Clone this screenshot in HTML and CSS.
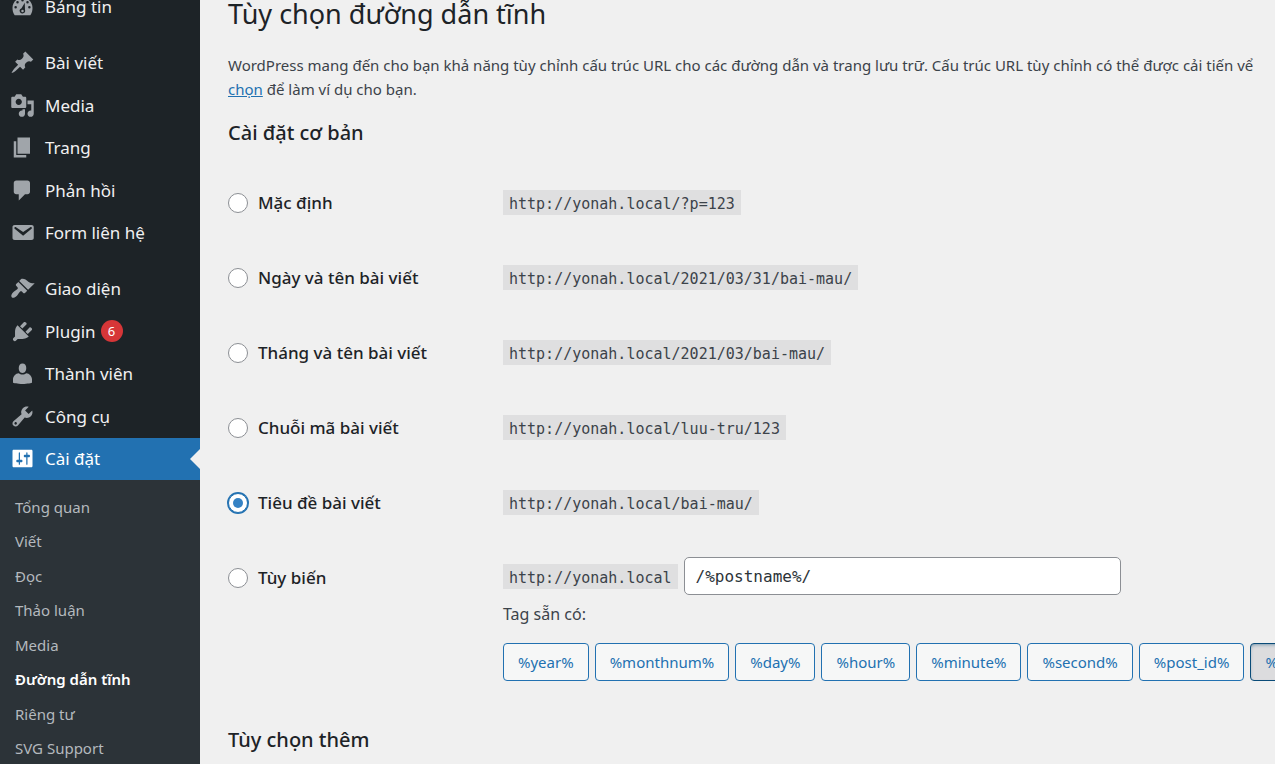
FILE: index.html
```html
<!DOCTYPE html>
<html lang="vi">
<head>
<meta charset="utf-8">
<title>Tùy chọn đường dẫn tĩnh</title>
<link rel="stylesheet" href="styles.css">
</head>
<body>
<div class="shell">
  <nav class="sidebar" aria-label="Menu chính">
    <ul class="menu">
      <li><a href="#"><svg class="icon" viewBox="0 0 20 20"><path fill-rule="evenodd" d="M3.76 17h12.48c1.34-1.63 1.76-3.73 1.76-6 0-4.42-3.58-8-8-8s-8 3.58-8 8c0 2.27.42 4.37 1.76 6zM10 4a1 1 0 1 1 0 2 1 1 0 0 1 0-2zM6 5.500a1 1 0 1 1 0 2 1 1 0 0 1 0-2zM14 5.500a1 1 0 1 1 0 2 1 1 0 0 1 0-2zM4.500 9.500a1 1 0 1 1 0 2 1 1 0 0 1 0-2zM15.500 9.500a1 1 0 1 1 0 2 1 1 0 0 1 0-2zM11.800 6.900L12 12.700a2.200 2.200 0 1 1-2.800-1.400zM10 12.500a1 1 0 1 0 0 2 1 1 0 0 0 0-2z"/></svg>Bảng tin</a></li>
    </ul>
    <ul class="menu">
      <li><a href="#"><svg class="icon" viewBox="0 0 20 20"><path d="M10.440 3.020l1.820-1.820 6.360 6.350-1.830 1.820c-1.050-.680-2.480-.570-3.410.360l-.750.750c-.920.930-1.040 2.350-.350 3.410l-1.830 1.820-2.410-2.410-2.800 2.790c-.420.420-3.380 2.710-3.800 2.290s1.860-3.390 2.280-3.810l2.790-2.790L4.100 9.360l1.830-1.820c1.050.690 2.480.570 3.400-.360l.75-.750c.930-.920 1.050-2.350.360-3.410z"/></svg>Bài viết</a></li>
      <li><a href="#"><svg class="icon" viewBox="0 0 20 20"><path d="M13 11V4c0-.55-.45-1-1-1h-1.670L9 1H5L3.670 3H2c-.55 0-1 .45-1 1v7c0 .55.45 1 1 1h10c.55 0 1-.45 1-1zM7 4.500c1.380 0 2.500 1.120 2.500 2.500S8.380 9.500 7 9.500 4.500 8.380 4.500 7 5.620 4.500 7 4.500zM14 6h5v10.500c0 1.380-1.120 2.500-2.500 2.500S14 17.880 14 16.500s1.120-2.500 2.500-2.500c.17 0 .34.02.5.05V9h-3V6zm-4 8.050V13h2v3.500c0 1.380-1.120 2.500-2.500 2.500S7 17.880 7 16.500 8.120 14 9.500 14c.17 0 .34.02.5.05z"/></svg>Media</a></li>
      <li><a href="#"><svg class="icon" viewBox="0 0 20 20"><path d="M6 15V2h10v13H6zm-1 1h8v2H3V5h2v11z"/></svg>Trang</a></li>
      <li><a href="#"><svg class="icon" viewBox="0 0 20 20"><path d="M5 2h9c1.100 0 2 .9 2 2v7c0 1.100-.9 2-2 2h-2l-5 5v-5H5c-1.100 0-2-.9-2-2V4c0-1.100.9-2 2-2z"/></svg>Phản hồi</a></li>
      <li><a href="#"><svg class="icon" viewBox="0 0 20 20"><path d="M3.870 4h13.250C18.370 4 19 4.590 19 5.790v8.420c0 1.190-.63 1.790-1.880 1.790H3.870c-1.250 0-1.880-.6-1.880-1.790V5.790c0-1.200.63-1.790 1.880-1.790zm6.620 8.600l6.740-5.530c.24-.2.43-.66.13-1.070-.29-.41-.82-.42-1.170-.17l-5.700 3.860L4.800 5.830c-.35-.25-.88-.24-1.170.17-.3.41-.11.87.13 1.070z"/></svg>Form liên hệ</a></li>
    </ul>
    <ul class="menu">
      <li><a href="#"><svg class="icon" viewBox="0 0 20 20"><path d="M14.480 11.060L7.410 3.990l1.500-1.500c.5-.56 2.300-.47 3.510.32 1.210.8 1.430 1.280 2.910 2.100 1.180.64 2.450 1.260 4.450.85zm-.71.71L6.700 4.700 4.930 6.470c-.39.39-.39 1.020 0 1.410l1.060 1.060c.39.39.39 1.030 0 1.420-.6.6-1.430 1.110-2.210 1.690-.35.26-.7.53-1.010.84C1.430 14.230.4 16.080 1.400 17.070c.99 1 2.840-.03 4.180-1.360.31-.31.58-.66.85-1.020.57-.78 1.080-1.610 1.690-2.210.39-.39 1.020-.39 1.410 0l1.060 1.060c.39.39 1.020.39 1.410 0z"/></svg>Giao diện</a></li>
      <li><a href="#"><svg class="icon" viewBox="0 0 20 20"><path d="M13.110 4.360L9.870 7.600 8 5.730l3.240-3.240c.35-.34 1.050-.2 1.560.32.52.51.66 1.210.31 1.550zm-8 1.770l.91-1.120 9.010 9.010-1.190.84c-.71.71-2.630 1.160-3.820 1.160H6.140L4.900 17.260c-.59.59-1.540.59-2.120 0-.59-.58-.59-1.530 0-2.120l1.240-1.240v-3.880c0-1.130.4-3.190 1.090-3.890zm7.260 3.970l3.240-3.240c.34-.35 1.040-.21 1.550.31.52.51.66 1.210.31 1.550l-3.240 3.250z"/></svg>Plugin<span class="badge">6</span></a></li>
      <li><a href="#"><svg class="icon" viewBox="0 0 20 20"><path d="M10 9.600c-2.300 0-3-2.300-3-4C7 3.600 8 2 10 2s3 1.600 3 3.600c0 1.700-.7 4-3 4zM7 9.700c.8.750 1.800 1.100 3 1.100s2.200-.35 3-1.100c2.500.2 4.600 2.400 4.600 4.900v2.700s-3.800 1-7.600 1-7.600-1-7.600-1v-2.700c0-2.500 2.100-4.700 4.600-4.900z"/></svg>Thành viên</a></li>
      <li><a href="#"><svg class="icon" viewBox="0 0 20 20"><path d="M16.680 9.770c-1.340 1.340-3.300 1.670-4.950.99l-5.410 6.520c-.99.99-2.590.99-3.580 0s-.99-2.590 0-3.570l6.520-5.420c-.68-1.650-.35-3.610.99-4.950 1.280-1.280 3.120-1.620 4.720-1.060l-2.890 2.890 2.820 2.820 2.860-2.870c.53 1.580.18 3.390-1.080 4.650zM3.810 16.210c.4.39 1.040.39 1.430 0 .4-.4.4-1.040 0-1.430-.39-.4-1.030-.4-1.430 0-.39.39-.39 1.030 0 1.430z"/></svg>Công cụ</a></li>
      <li><a class="current" href="#"><svg class="icon" viewBox="0 0 20 20"><path d="M18 16V4c0-.55-.45-1-1-1H3c-.55 0-1 .45-1 1v12c0 .55.45 1 1 1h14c.55 0 1-.45 1-1zM8 11h1c.55 0 1 .45 1 1s-.45 1-1 1H8v1.500c0 .28-.22.5-.5.5s-.5-.22-.5-.5V13H6c-.55 0-1-.45-1-1s.45-1 1-1h1V5.500c0-.28.22-.5.5-.5s.5.22.5.5V11zm5-2h-1c-.55 0-1-.45-1-1s.45-1 1-1h1V5.500c0-.28.22-.5.5-.5s.5.22.5.5V7h1c.55 0 1 .45 1 1s-.45 1-1 1h-1v5.500c0 .28-.22.5-.5.5s-.5-.22-.5-.5V9z"/></svg>Cài đặt</a></li>
    </ul>
    <ul class="submenu">
      <li><a href="#">Tổng quan</a></li>
      <li><a href="#">Viết</a></li>
      <li><a href="#">Đọc</a></li>
      <li><a href="#">Thảo luận</a></li>
      <li><a href="#">Media</a></li>
      <li><a class="here" href="#">Đường dẫn tĩnh</a></li>
      <li><a href="#">Riêng tư</a></li>
      <li><a href="#">SVG Support</a></li>
    </ul>
  </nav>

  <main class="content">
    <h1>Tùy chọn đường dẫn tĩnh</h1>
    <p class="intro">WordPress mang đến cho bạn khả năng tùy chỉnh cấu trúc URL cho các đường dẫn và trang lưu trữ. Cấu trúc URL tùy chỉnh có thể được cải tiến vể<br><a href="#">chọn</a> để làm ví dụ cho bạn.</p>
    <h2>Cài đặt cơ bản</h2>
    <form class="options">
      <div class="option">
        <label><input type="radio" name="structure">Mặc định</label>
        <div><code>http://yonah.local/?p=123</code></div>
      </div>
      <div class="option">
        <label><input type="radio" name="structure">Ngày và tên bài viết</label>
        <div><code>http://yonah.local/2021/03/31/bai-mau/</code></div>
      </div>
      <div class="option">
        <label><input type="radio" name="structure">Tháng và tên bài viết</label>
        <div><code>http://yonah.local/2021/03/bai-mau/</code></div>
      </div>
      <div class="option">
        <label><input type="radio" name="structure">Chuỗi mã bài viết</label>
        <div><code>http://yonah.local/luu-tru/123</code></div>
      </div>
      <div class="option">
        <label><input type="radio" name="structure" checked>Tiêu đề bài viết</label>
        <div><code>http://yonah.local/bai-mau/</code></div>
      </div>
      <div class="option">
        <label><input type="radio" name="structure">Tùy biến</label>
        <div class="custom">
          <div class="address"><code>http://yonah.local</code><input class="pattern" type="text" value="/%postname%/" aria-label="Cấu trúc tùy biến"></div>
          <p class="hint">Tag sẵn có:</p>
          <div class="tags">
            <button type="button">%year%</button>
            <button type="button">%monthnum%</button>
            <button type="button">%day%</button>
            <button type="button">%hour%</button>
            <button type="button">%minute%</button>
            <button type="button">%second%</button>
            <button type="button">%post_id%</button>
            <button type="button" class="pressed">%postname%</button>
          </div>
        </div>
      </div>
    </form>
    <h2 class="more">Tùy chọn thêm</h2>
  </main>
</div>
</body>
</html>
```

FILE: styles.css
```css
* { box-sizing: border-box; }

body {
  margin: 0;
  background: #f0f0f0;
  color: #3c434a;
  font-family: "Noto Sans", "Open Sans", sans-serif;
  overflow: hidden;
}

.shell {
  display: flex;
  height: 100vh;
  overflow: hidden;
}

/* Sidebar */
.sidebar {
  flex: none;
  width: 200px;
  margin-top: -14px;
  background: #1d2327;
}

.menu,
.submenu {
  margin: 0;
  padding: 0;
  list-style: none;
}

.menu + .menu { margin-top: 14px; }

.menu li { height: 42px; }
.menu li:nth-child(even) { height: 43px; }

.menu a {
  position: relative;
  display: flex;
  align-items: center;
  gap: 10px;
  height: 100%;
  padding: 0 0 1px 10px;
  color: #f0f0f1;
  font-size: 17px;
  text-decoration: none;
}

.icon {
  flex: none;
  width: 25px;
  height: 25px;
  fill: #a0a5aa;
}

.badge {
  width: 22px;
  height: 22px;
  margin-left: -5px;
  border-radius: 11px;
  background: #d63638;
  color: #fff;
  font-size: 13px;
  line-height: 22px;
  text-align: center;
}

.menu .current {
  background: #2271b1;
  color: #fff;
}

.current .icon { fill: #fff; }

.current::after {
  content: "";
  position: absolute;
  top: 11px;
  right: 0;
  border: 10px solid transparent;
  border-left-width: 0;
  border-right-color: #f0f0f0;
}

.submenu {
  padding: 10px 0;
  background: #2c3338;
}

.submenu li { height: 34px; }
.submenu li:nth-child(even) { height: 35px; }

.submenu a {
  display: flex;
  align-items: center;
  height: 100%;
  padding: 0 0 1px 15px;
  color: #b4b9be;
  font-size: 15px;
  text-decoration: none;
}

.submenu .here {
  color: #fff;
  font-weight: 600;
}

/* Settings page */
.content {
  flex: 1;
  min-width: 0;
  padding-left: 28px;
  overflow: hidden;
}

h1 {
  margin: 0;
  color: #1d2327;
  font-size: 27px;
  font-weight: 400;
  line-height: 28px;
}

.intro {
  margin: 25px 0 0;
  font-size: 15px;
  line-height: 24px;
  white-space: nowrap;
}

.intro a { color: #2271b1; }

h2 {
  margin: 16px 0 0;
  color: #1d2327;
  font-size: 20px;
  font-weight: 500;
  line-height: 32px;
}

.options { padding-top: 41px; }

.option {
  display: grid;
  grid-template-columns: 275px 1fr;
  align-items: start;
  min-height: 75px;
}

.option label {
  display: flex;
  align-items: center;
  gap: 10px;
  color: #1d2327;
  font-size: 17px;
  font-weight: 500;
  line-height: 26px;
}

.option input[type="radio"] {
  appearance: none;
  flex: none;
  display: grid;
  place-items: center;
  width: 20px;
  height: 20px;
  margin: 0;
  border: 1px solid #8c8f94;
  border-radius: 50%;
  background: #fff;
}

.option input[type="radio"]:checked {
  border-color: #2271b1;
  box-shadow: 0 0 0 1px #2271b1;
}

.option input[type="radio"]:checked::before {
  content: "";
  width: 10px;
  height: 10px;
  border-radius: 50%;
  background: #3582c4;
}

code {
  display: block;
  width: max-content;
  padding: 3px 6px 0;
  background: #dfdfe0;
  font-family: "DejaVu Sans Mono", "Liberation Mono", monospace;
  font-size: 15px;
  line-height: 22px;
}

.custom { margin-top: -8px; }

.address {
  display: flex;
  align-items: center;
  gap: 6px;
}

.pattern {
  width: 437px;
  height: 38px;
  padding: 0 11px;
  border: 1px solid #8c8f94;
  border-radius: 5px;
  background: #fff;
  color: #2c3338;
  font-family: "DejaVu Sans Mono", "Liberation Mono", monospace;
  font-size: 16px;
}

.hint {
  margin: 6px 0 16px;
  font-size: 16px;
  line-height: 26px;
}

.tags {
  display: flex;
  gap: 6px;
}

.tags button {
  flex: none;
  height: 38px;
  padding: 0 14px;
  border: 1px solid #2271b1;
  border-radius: 4px;
  background: #f6f7f7;
  color: #2271b1;
  font-family: inherit;
  font-size: 15px;
}

.tags .pressed {
  border-color: #0a4b78;
  background: #dcdcde;
  box-shadow: inset 0 2px 5px -3px #0a4b78;
}

.more { margin-top: 43px; }
```
